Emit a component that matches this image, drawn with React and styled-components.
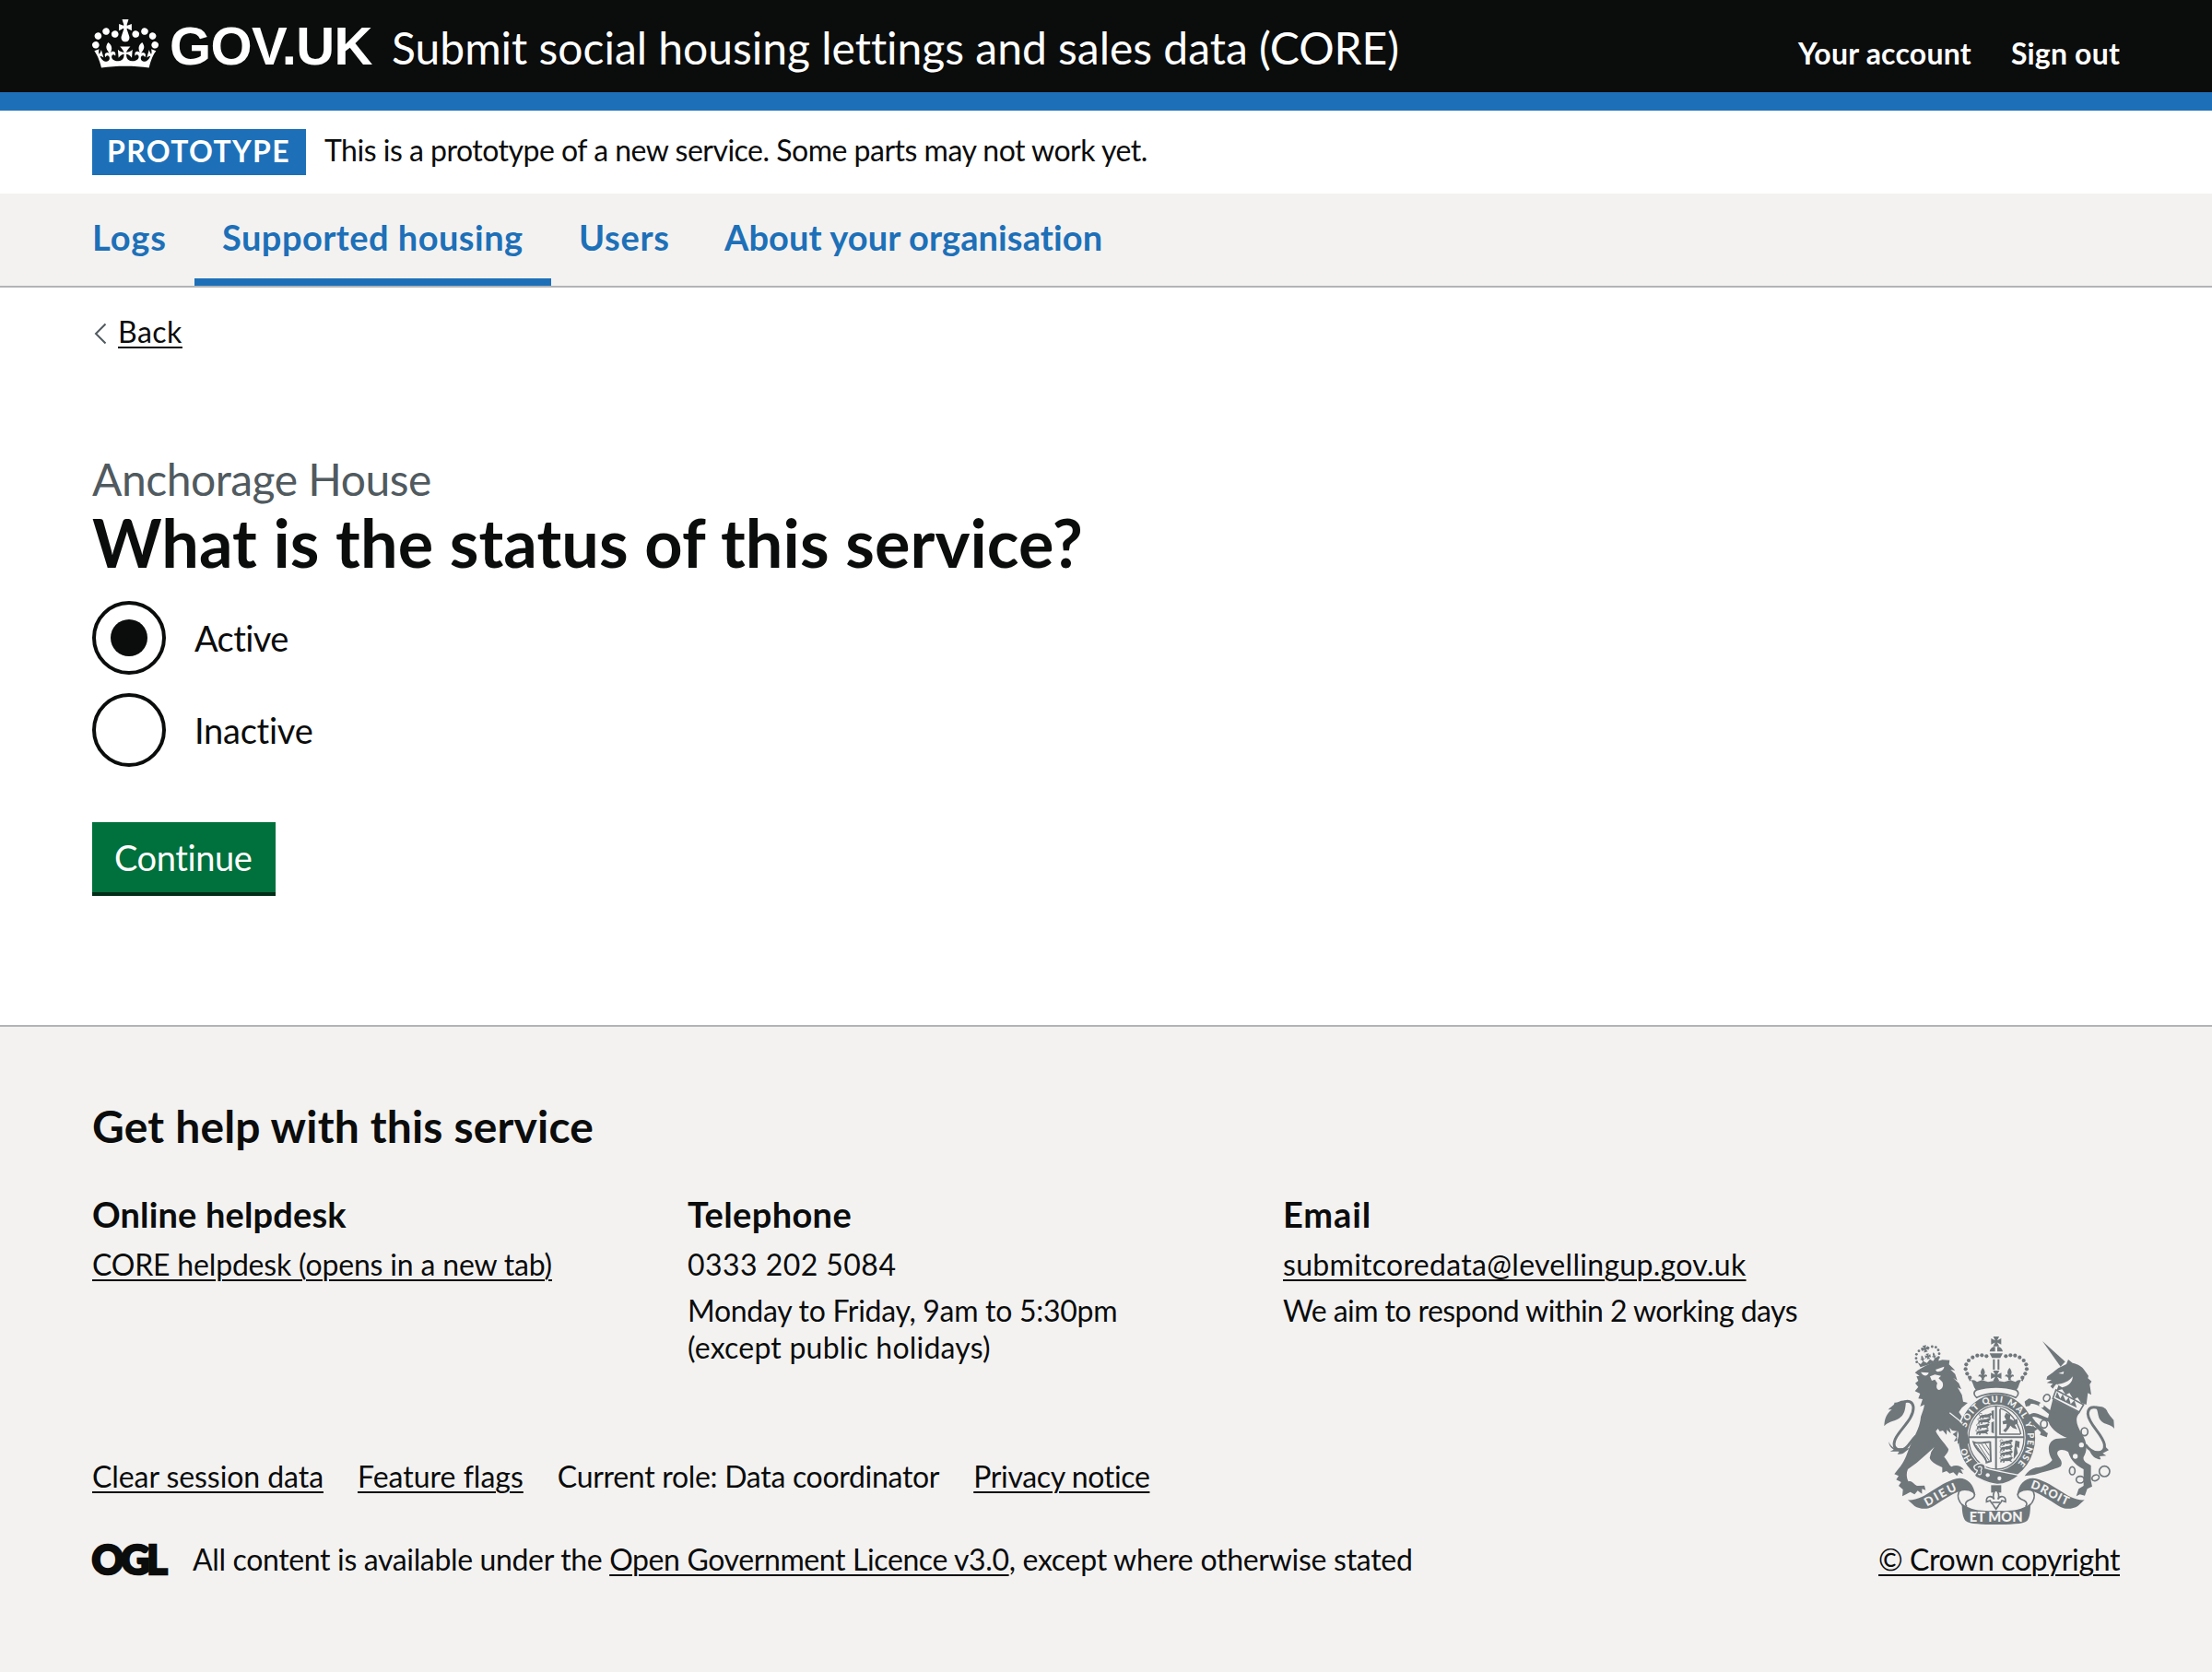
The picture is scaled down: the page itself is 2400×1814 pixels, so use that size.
import React from "react";
import styled, { createGlobalStyle } from "styled-components";

const ink = "#0b0c0c";
const blue = "#1d70b8";
const grey = "#f3f2f1";
const rule = "#b1b4b6";
const crestGrey = "#6f777b";

const GlobalStyle = createGlobalStyle`
  * { box-sizing: border-box; }
  body {
    margin: 0;
    background: #fff;
    color: ${ink};
    font-family: Lato, "Liberation Sans", sans-serif;
    font-variant-ligatures: none;
    -webkit-font-smoothing: antialiased;
  }
`;

const Page = styled.div`
  width: 2400px;
  min-height: 1814px;
  display: flex;
  flex-direction: column;
`;

/* ---------- header ---------- */
const Header = styled.header`
  height: 120px;
  padding: 0 100px;
  display: flex;
  align-items: flex-start;
  background: ${ink};
  color: #fff;
  border-bottom: 20px solid ${blue};
`;
const CrownLogo = styled.svg`
  width: 72px;
  height: 53px;
  margin-top: 21px;
  fill: #fff;
`;
const Wordmark = styled.span`
  width: 222px;
  margin: 20px 0 0 12px;
  font: 700 58px/60px "Liberation Sans", sans-serif;
  letter-spacing: -0.6px;
  white-space: nowrap;
`;
const ServiceName = styled.span`
  margin: 22px 0 0 19px;
  font-size: 48px;
  line-height: 60px;
  letter-spacing: -0.02px;
`;
const AccountNav = styled.nav`
  margin: 38px 0 0 auto;
  display: flex;
  gap: 43px;
  font-size: 32px;
  line-height: 40px;
  font-weight: 700;
`;
const AccountLink = styled.a`
  letter-spacing: ${(p) => p.$track || 0}px;
`;

/* ---------- phase banner ---------- */
const PhaseBanner = styled.div`
  height: 90px;
  padding: 20px 100px;
  display: flex;
  align-items: flex-start;
`;
const PhaseTag = styled.strong`
  width: 232px;
  height: 50px;
  padding-left: 16px;
  background: ${blue};
  color: #fff;
  font-size: 32px;
  line-height: 48px;
  letter-spacing: 1.35px;
`;
const PhaseText = styled.span`
  margin-left: 20px;
  font-size: 32px;
  line-height: 46px;
  letter-spacing: -0.5px;
`;

/* ---------- primary navigation ---------- */
const PrimaryNav = styled.nav`
  height: 102px;
  padding-left: 70px;
  display: flex;
  background: ${grey};
  border-bottom: 2px solid ${rule};
`;
const NavItem = styled.a`
  width: ${(p) => p.$width}px;
  padding: 0 30px;
  color: ${blue};
  font-size: 38px;
  line-height: 95px;
  font-weight: 700;
  letter-spacing: ${(p) => p.$track}px;
  white-space: nowrap;
  box-shadow: ${(p) => (p.$current ? `inset 0 -8px ${blue}` : "none")};
`;

/* ---------- main ---------- */
const Main = styled.main`
  height: 800px;
  padding: 28px 100px 0;
`;
const Text = styled.span`
  font-size: 32px;
  line-height: 40px;
  letter-spacing: ${(p) => p.$track || 0}px;
  white-space: nowrap;
`;
const Link = styled(Text).attrs({ as: "a" })`
  text-decoration: underline;
  text-decoration-thickness: 2px;
  text-underline-offset: 4px;
`;
const BackRow = styled.div`
  height: 40px;
  display: flex;
  align-items: flex-start;
`;
const Chevron = styled.svg`
  width: 28px;
  height: 40px;
  fill: none;
  stroke: #505a5f;
  stroke-width: 2;
`;
const Caption = styled.div`
  margin-top: 110px;
  color: #505a5f;
  font-size: 48px;
  line-height: 60px;
  letter-spacing: -0.49px;
`;
const Title = styled.h1`
  margin: 0 0 26px;
  font-size: 72px;
  line-height: 76px;
  letter-spacing: 0.08px;
`;
const RadioGroup = styled.div`
  display: flex;
  flex-direction: column;
  gap: 20px;
`;
const RadioRow = styled.label`
  height: 80px;
  display: flex;
  font-size: 38px;
  line-height: 80px;
  letter-spacing: ${(p) => p.$track}px;
`;
const RadioMark = styled.span`
  width: 80px;
  height: 80px;
  margin-right: 31px;
  border: 4px solid ${ink};
  border-radius: 50%;
  display: grid;
  place-items: center;
  &::after {
    content: "";
    width: 40px;
    height: 40px;
    border-radius: 50%;
    background: ${(p) => (p.$checked ? ink : "transparent")};
  }
`;
const Button = styled.button`
  display: block;
  width: 199px;
  height: 76px;
  margin-top: 60px;
  padding: 0 0 0 24px;
  border: 0;
  background: #00703c;
  box-shadow: 0 4px 0 #002d18;
  color: #fff;
  text-align: left;
  font-family: inherit;
  font-size: 38px;
  line-height: 75px;
  letter-spacing: -0.4px;
`;

/* ---------- footer ---------- */
const Footer = styled.footer`
  flex: 1;
  padding: 78px 100px 0;
  background: ${grey};
  border-top: 2px solid ${rule};
`;
const HelpTitle = styled.h2`
  margin: 0 0 40px;
  font-size: 48px;
  line-height: 60px;
  letter-spacing: 0.17px;
`;
const HelpGrid = styled.div`
  display: grid;
  grid-template-columns: 646px 646px 1fr;
  height: 189px;
`;
const HelpColumn = styled.div`
  display: flex;
  flex-direction: column;
  align-items: flex-start;
  gap: 10px;
`;
const HelpHeading = styled.h3`
  margin: 0;
  font-size: 38px;
  line-height: 50px;
  letter-spacing: ${(p) => p.$track}px;
`;
const Lines = styled.div`
  display: flex;
  flex-direction: column;
`;
const FooterMeta = styled.div`
  display: flex;
  justify-content: space-between;
  align-items: flex-end;
  margin-top: -31px;
`;
const MetaLinks = styled.div`
  display: flex;
  gap: 37px;
  margin-bottom: 50px;
`;
const Licence = styled.div`
  display: flex;
  align-items: flex-start;
  height: 40px;
`;
const LicenceText = styled.div`
  margin-left: 26px;
  font-size: 32px;
  line-height: 40px;
  white-space: pre;
`;
const OglLogo = styled.svg`
  width: 83px;
  height: 40px;
  overflow: visible;
`;
const CopyrightBlock = styled.div`
  display: flex;
  flex-direction: column;
  align-items: flex-end;
`;
const CrestSvg = styled.svg`
  width: 250px;
  height: 204px;
  margin: 0 6px 18px 0;
`;

function Crown() {
  return (
    <CrownLogo viewBox="0 0 132 97" aria-hidden="true">
      <path d="M25 30.2c3.5 1.5 7.7-.2 9.1-3.7 1.5-3.6-.2-7.8-3.9-9.2-3.6-1.4-7.6.3-9.1 3.9-1.4 3.5.3 7.5 3.9 9zM9 39.5c3.6 1.5 7.8-.2 9.2-3.7 1.5-3.6-.2-7.8-3.9-9.1-3.6-1.5-7.6.2-9.1 3.8-1.4 3.5.3 7.5 3.8 9zM4.4 57.2c3.5 1.5 7.7-.2 9.1-3.8 1.5-3.6-.2-7.7-3.9-9.1-3.5-1.5-7.6.3-9.1 3.8-1.4 3.5.3 7.6 3.9 9.1zm38.3-21.4c3.5 1.5 7.7-.2 9.1-3.8 1.5-3.6-.2-7.7-3.9-9.1-3.6-1.5-7.6.3-9.1 3.8-1.3 3.6.4 7.7 3.9 9.1zm64.4-5.6c-3.6 1.5-7.8-.2-9.1-3.7-1.5-3.6.2-7.8 3.8-9.2 3.6-1.4 7.7.3 9.2 3.9 1.3 3.5-.4 7.5-3.9 9zm15.9 9.3c-3.6 1.5-7.7-.2-9.1-3.7-1.5-3.6.2-7.8 3.7-9.1 3.6-1.5 7.7.2 9.2 3.8 1.5 3.5-.3 7.5-3.8 9zm4.7 17.7c-3.6 1.5-7.8-.2-9.2-3.8-1.5-3.6.2-7.7 3.9-9.1 3.6-1.5 7.7.3 9.2 3.8 1.3 3.5-.4 7.6-3.9 9.1zM89.3 35.8c-3.6 1.5-7.8-.2-9.2-3.8-1.4-3.6.2-7.7 3.9-9.1 3.6-1.5 7.7.3 9.2 3.8 1.4 3.6-.3 7.7-3.9 9.1zM69.7 17.7l8.9 4.7V9.3l-8.9 2.8c-.2-.3-.5-.6-.9-.9L72.4 0H59.6l3.5 11.2c-.3.3-.6.5-.9.9l-8.8-2.8v13.1l8.8-4.7c.3.3.6.7.9.9l-5 15.4v.1c-.2.8-.4 1.6-.4 2.4 0 4.1 3.1 7.5 7 8.1h.2c.3 0 .7.1 1 .1.4 0 .7 0 1-.1h.2c4-.6 7.1-4.1 7.1-8.1 0-.8-.1-1.7-.4-2.4V34l-5.1-15.4c.4-.2.7-.6 1-.9zM66 92.8c16.9 0 32.8 1.1 47.1 3.2 4-16.9 8.9-26.7 14-33.5l-9.6-3.4c1 4.9 1.1 7.2 0 10.2-1.5-1.4-3-4.3-4.2-8.7L108.6 76c2.8-2 5-3.2 7.5-3.3-4.4 9.4-10 11.9-13.6 11.2-4.3-.8-6.3-4.6-5.6-7.9 1-4.7 5.7-5.9 8-.5 4.3-8.7-3-11.4-7.6-8.8 7.1-7.2 7.9-13.5 2.1-21.1-8 6.1-8.1 12.3-4.5 20.8-4.7-5.4-12.1-2.5-9.5 6.2 3.4-5.2 7.9-2 7.2 3.1-.6 4.3-6.4 7.8-13.5 7.2-10.3-.9-10.9-8-11.2-13.8 2.5-.5 7.1 1.8 11 7.3L80.2 60c-4.1 4.4-8 5.3-12.3 5.4 1.4-4.4 8-11.6 8-11.6H55.5s6.4 7.2 7.9 11.6c-4.2-.1-8-1-12.3-5.4l1.4 16.4c3.9-5.5 8.5-7.7 10.9-7.3-.3 5.8-.9 12.8-11.1 13.8-7.2.6-12.9-2.9-13.5-7.2-.7-5 3.8-8.3 7.1-3.1 2.7-8.7-4.6-11.6-9.4-6.2 3.7-8.5 3.6-14.7-4.6-20.8-5.8 7.6-5 13.9 2.2 21.1-4.7-2.6-11.9.1-7.7 8.8 2.3-5.5 7.1-4.2 8.1.5.7 3.3-1.3 7.1-5.7 7.9-3.5.7-9-1.8-13.5-11.2 2.5.1 4.7 1.3 7.5 3.3l-4.7-15.4c-1.2 4.4-2.7 7.2-4.3 8.7-1.1-3-.9-5.3 0-10.2l-9.5 3.4c5 6.9 9.9 16.7 14 33.5 14.8-2.1 30.8-3.2 47.7-3.2z" />
    </CrownLogo>
  );
}

/* ---------- royal arms ---------- */
const archPearls = [[352, 194], [343, 181], [338, 166], [340, 151], [348, 138], [361, 128], [376, 122], [391, 121], [406, 124]];
const lionCrownPearls = [[179, 143], [177, 131], [178, 118], [186, 107], [197, 101], [216, 97], [229, 93], [241, 95], [249, 104], [252, 116], [250, 128]];

const Cross = ({ x, y, s }) => (
  <path
    transform={`translate(${x} ${y}) scale(${s})`}
    d="M-6-10H6L2-2 10-6V6L2 2 6 10H-6L-2 2-10 6V-6L-2-2z"
  />
);
const Fleur = ({ x, y, s = 1 }) => (
  <path
    transform={`translate(${x} ${y}) scale(${s})`}
    d="M0-20C9-9 8-2 3 5 8 0 15 1 14 9 9 5 7 10 4 13V20H-4V13C-7 10-9 5-14 9-15 1-8 0-3 5-8-2-9-9 0-20z"
  />
);
const PassantLion = ({ x, y }) => (
  <g transform={`translate(${x} ${y})`}>
    <path d="M0 4C4-2 10 0 14-1 20-4 26-2 30-5L36-7 40-3 36 2 33 5 37 8 35 11 28 7 20 8 14 7 12 12H6L9 8 4 8 2 12-2 11z" />
    <path d="M2 3C-4 1-3-6 3-6L8-4" fill="none" stroke={crestGrey} strokeWidth="2.5" />
  </g>
);
const RibbonHalf = () => (
  <>
    <path d="M150 592C178 594 205 578 232 560 262 541 290 524 318 521 345 521 364 540 370 577 356 558 340 556 322 562 290 573 250 603 228 615 208 625 186 620 172 612z" />
    <path
      d="M316 566C322 556 346 556 362 566 376 580 358 590 346 594 336 600 336 608 342 614M316 566C308 585 318 600 330 612"
      fill="none"
      stroke={crestGrey}
      strokeWidth="5"
    />
  </>
);

function Crest() {
  const light = grey;
  return (
    <CrestSvg viewBox="72 60 750 612" fill={crestGrey} aria-hidden="true">
      {/* lion */}
      <g>
        {lionCrownPearls.map(([x, y]) => (
          <circle key={x + "-" + y} cx={x} cy={y} r="4.3" />
        ))}
        <g transform="rotate(-14 206 100)">
          <Cross x={206} y={100} s={1.1} />
          <Cross x={209} y={126} s={0.9} />
          <Fleur x={190} y={128} s={0.5} />
          <Fleur x={229} y={128} s={0.5} />
        </g>
        <path d="M182 144 192 150 200 140 212 146 222 134 232 140 240 128 252 126 250 141 191 160z" />
        <path d="M192 164C212 151 236 144 262 136L286 137 284 151 304 170 289 168 304 182 311 203 297 194 316 212 324 232 312 226 326 250 330 272 345 276 326 292 316 306 332 330 347 368 349 402 342 416 336 402 330 416 322 402 313 410 313 398 300 402 308 388 296 378 310 368 294 366 286 357 290 376 277 364 276 380 264 366 254 369 248 360 241 368C250 388 265 400 282 426 284 434 274 444 268 452 278 462 284 478 292 484 306 476 326 482 333 494L322 492 330 508 316 502 310 514 298 502 286 506 276 498 262 503 262 486C246 478 226 470 221 455L226 436 236 420 214 440 178 472 150 492C144 506 146 522 152 532 164 526 170 544 182 546L204 545 208 560 196 556 196 572 182 562 172 574 158 566 144 574 132 580 134 558 120 546 128 534 112 526 120 514 106 508 120 490C138 470 146 446 154 424L166 396C178 374 190 350 192 322 197 306 202 296 204 282L190 288 198 264 184 262 190 246 173 238 184 224 174 212 184 204 178 190 188 188 173 178 182 170z" />
        <path
          d="M176 384C156 404 146 432 122 429 98 424 102 400 120 376 142 346 168 322 168 292 167 270 148 266 134 276"
          fill="none"
          stroke={crestGrey}
          strokeWidth="9"
        />
        <path d="M144 270C128 264 116 278 106 275 108 284 96 286 86 298L98 298C82 310 74 326 73 352 84 336 104 338 122 326 140 314 142 296 144 270zM88 402C92 414 100 420 108 424L156 424C142 434 136 446 116 443L122 434 92 434 104 428C94 422 88 414 88 402z" />
        <path fill={light} d="M192 176 218 178C216 188 204 190 198 184zM240 168 268 158C268 170 254 176 244 174zM222 190 238 184 258 188 250 196 262 208C268 220 262 232 252 234 242 232 242 220 246 212L238 200 228 204z" />
        <path d="M286 308 346 356" stroke={light} strokeWidth="4" />
      </g>

      {/* garter and shield */}
      <g>
        <path
          d="M440 246A127 144 0 0 1 510 510L440 540 372 512A127 144 0 0 1 440 246z"
          stroke={light}
          strokeWidth="5"
        />
        <ellipse cx="438" cy="389" rx="95" ry="108" fill={light} />
        <ellipse cx="438" cy="389" rx="90" ry="103" fill={light} stroke={crestGrey} strokeWidth="4" />
        <path d="M437 286V492M348 388H528" stroke={crestGrey} strokeWidth="6" />
        <PassantLion x={384} y={316} />
        <PassantLion x={380} y={332} />
        <PassantLion x={376} y={350} />
        <PassantLion x={374} y={368} />
        <PassantLion x={452} y={402} />
        <PassantLion x={452} y={420} />
        <PassantLion x={452} y={438} />
        <PassantLion x={452} y={458} />
        <path d="M500 398 514 402 512 424 504 418 508 440 494 460 496 430zM422 302 430 300V330L424 326zM422 340 430 336V376L422 372z" />
        <path d="M450 296V378H516" fill="none" stroke={crestGrey} strokeWidth="5" />
        <path d="M470 308 484 316 482 328 494 334 506 328 508 342 498 348 506 362 492 358 484 350 478 360 468 372 460 366 470 356 472 344 460 346 458 336 470 332 464 320z" />
        <path d="M450 294C480 300 508 336 518 378" fill="none" stroke={crestGrey} strokeWidth="4" />
        <path d="M364 404C384 412 404 402 418 404L420 466 406 470C404 446 372 434 364 404z" fill="none" stroke={crestGrey} strokeWidth="6" />
        <path d="M380 412 414 464M390 410 416 448M402 408 416 430M372 414 404 458" stroke={crestGrey} strokeWidth="3" />
        <path id="garter" d="M438 504A102 115 0 0 1 438 274A102 115 0 0 1 438 504" fill="none" />
        <g fill={light} fontFamily="Lato" fontWeight="900" fontSize="29">
          <text>
            <textPath href="#garter" startOffset="92">HO</textPath>
          </text>
          <text>
            <textPath href="#garter" startOffset="203" textLength="400">SOIT QUI MAL Y PENSE</textPath>
          </text>
        </g>
        <path d="M371 478C386 466 404 476 402 488 440 500 472 502 512 512 490 530 466 542 440 541 414 540 392 528 372 518 360 508 376 506 376 496 364 492 362 482 371 478z" stroke={light} strokeWidth="4" />
        <circle cx="410" cy="511" r="6.5" fill={light} />
        <circle cx="448" cy="522" r="6.5" fill={light} />
        <path d="M378 486C388 480 394 486 388 496 393 506 386 512 379 508" fill="none" stroke={light} strokeWidth="3.5" />
        <path d="M421 544H454V568H421z" />
        <path
          d="M437 558C448 570 448 580 443 590 450 576 470 578 468 598L456 594C452 604 446 606 444 612L437 622 430 612C428 606 422 604 418 594L406 598C404 578 424 576 431 590 426 580 426 570 437 558z"
          fill={light}
          stroke={crestGrey}
          strokeWidth="5"
        />
        <path d="M424 600H450" stroke={crestGrey} strokeWidth="5" />
      </g>

      {/* crown */}
      <g>
        {archPearls.map(([x, y]) => (
          <React.Fragment key={x}>
            <circle cx={x} cy={y} r="6.3" />
            <circle cx={875 - x} cy={y} r="6.3" />
          </React.Fragment>
        ))}
        <Cross x={437.5} y={76} s={1.65} />
        <path d="M428 94H434V109H416C418 100 422 96 428 94zM447 94H441V109H459C457 100 453 96 447 94zM416 115H459L451 130H424zM427 134H433V168H427zM442 134H448V168H442z" />
        <Cross x={437.5} y={188} s={1.7} />
        <Fleur x={394} y={182} />
        <Fleur x={481} y={182} />
        <path d="M344 184C352 196 360 206 366 226L374 238C415 222 460 222 501 238L509 226C515 206 523 196 531 184L524 206C514 200 508 200 500 208L484 202 464 208 437 203 411 208 391 202 375 208C367 200 361 200 351 206z" />
        <path d="M374 234C412 222 463 222 501 234 512 239 512 250 501 259 463 240 412 240 374 259 363 250 363 239 374 234z" fill={light} stroke={crestGrey} strokeWidth="5" />
      </g>

      {/* lion's paw over the garter */}
      <path d="M300 326C326 338 344 362 350 402L343 416 336 402 330 417 322 402 312 410 312 396 316 380z" />

      {/* unicorn */}
      <g>
        <path d="M588 75 662 142 647 158z" />
        <path d="M640 163 666 150 672 135 686 146C704 150 718 158 724 169L738 188 736 196 748 206 742 216 747 250 736 244 731 282 714 276 702 258 690 266 676 244 664 250 652 232 634 236 640 220C636 212 632 212 622 230L614 222 622 214 602 211 618 202 601 200 604 190C616 182 626 174 640 163z" />
        <path d="M636 216C656 214 676 206 686 190 688 206 674 222 652 226" fill={light} />
        <path d="M640 180 658 174 656 182z" fill={light} />
        <path d="M632 234 722 282 708 306 622 262z" fill={light} stroke={crestGrey} strokeWidth="5" />
        <path d="M630 258 636 240 646 262 654 248 664 270 674 258 680 280 692 268 700 292z" />
        <path d="M622 264 710 308C690 326 702 352 714 374 734 400 736 430 722 452 718 468 738 474 746 480L746 530 750 548 734 556 726 578 710 574 698 580 706 556 722 546 722 492C704 484 680 466 672 436 652 422 630 430 638 446 644 458 656 466 648 482 626 494 594 498 562 510L530 514C540 500 552 490 566 487 590 486 612 474 620 462 600 430 606 394 640 392L668 390C640 378 606 356 606 326z" />
        <path d="M614 308C594 296 578 270 546 272L534 276M612 332C590 330 562 306 552 318L546 322 560 340 598 378" fill="none" stroke={crestGrey} strokeWidth="12" />
        <path d="M530 272 544 262 560 266 546 286 534 288zM546 312 540 326 556 326zM584 370 606 374 602 388 580 380zM556 352 574 360 562 368z" />
        <path
          d="M728 412C752 446 794 446 790 412 784 378 738 346 736 312 736 290 752 286 772 294"
          fill="none"
          stroke={crestGrey}
          strokeWidth="9"
        />
        <path d="M760 288C782 284 798 294 800 306L808 318 820 332 822 360C812 346 790 348 778 334 766 320 772 304 760 288zM742 432C748 448 760 460 778 460L774 450 796 448 784 440 804 430 792 418 778 438z" />
        <g fill="none" stroke={crestGrey} strokeWidth="5">
          <ellipse cx="602" cy="260" rx="10" ry="12" transform="rotate(30 602 260)" />
          <ellipse cx="593" cy="345" rx="11" ry="13" />
          <ellipse cx="725" cy="370" rx="11" ry="13" fill={light} />
          <ellipse cx="685" cy="497" rx="9" ry="13" />
          <ellipse cx="711" cy="526" rx="13" ry="11" />
          <ellipse cx="761" cy="520" rx="12" ry="9" transform="rotate(-25 761 520)" />
          <circle cx="790" cy="499" r="17" />
        </g>
        <g fill={light}>
          <circle cx="585" cy="284" r="8" />
          <circle cx="715" cy="413" r="8" />
          <circle cx="695" cy="450" r="8" />
        </g>
      </g>

      {/* motto ribbon */}
      <RibbonHalf />
      <g transform="translate(875 0) scale(-1 1)">
        <RibbonHalf />
      </g>
      <path d="M326 604C360 630 400 628 437 627 475 628 515 630 549 604 549 625 548 650 538 660 526 671 480 672 437 672 395 672 350 671 338 660 328 650 326 625 326 604z" />
      <g fill={light} fontFamily="Lato" fontWeight="900">
        <path id="ribbonLeft" d="M212 613C246 596 276 574 318 558" fill="none" />
        <path id="ribbonRight" d="M548 553C590 564 630 596 676 612" fill="none" />
        <text fontSize="38">
          <textPath href="#ribbonLeft" textLength="112">DIEU</textPath>
        </text>
        <text fontSize="38">
          <textPath href="#ribbonRight" textLength="132">DROIT</textPath>
        </text>
        <text x="350" y="664" fontSize="44" textLength="174">
          ET MON
        </text>
      </g>
    </CrestSvg>
  );
}

export default function App() {
  return (
    <Page>
      <GlobalStyle />
      <Header>
        <Crown />
        <Wordmark>GOV.UK</Wordmark>
        <ServiceName>Submit social housing lettings and sales data (CORE)</ServiceName>
        <AccountNav>
          <AccountLink $track={0.22}>Your account</AccountLink>
          <AccountLink $track={0.18}>Sign out</AccountLink>
        </AccountNav>
      </Header>
      <PhaseBanner>
        <PhaseTag>PROTOTYPE</PhaseTag>
        <PhaseText>This is a prototype of a new service. Some parts may not work yet.</PhaseText>
      </PhaseBanner>
      <PrimaryNav>
        <NavItem $width={141} $track={0.9}>Logs</NavItem>
        <NavItem $width={387} $track={0.46} $current>Supported housing</NavItem>
        <NavItem $width={158} $track={0.7}>Users</NavItem>
        <NavItem $width={470} $track={0.1}>About your organisation</NavItem>
      </PrimaryNav>
      <Main>
        <BackRow>
          <Chevron viewBox="0 0 28 40">
            <path d="M14.5 11.5 4 22 14.5 32.5" />
          </Chevron>
          <Link $track={0.5}>Back</Link>
        </BackRow>
        <Caption>Anchorage House</Caption>
        <Title>What is the status of this service?</Title>
        <RadioGroup>
          <RadioRow $track={-0.6}>
            <RadioMark $checked />
            Active
          </RadioRow>
          <RadioRow $track={-0.25}>
            <RadioMark />
            Inactive
          </RadioRow>
        </RadioGroup>
        <Button>Continue</Button>
      </Main>
      <Footer>
        <HelpTitle>Get help with this service</HelpTitle>
        <HelpGrid>
          <HelpColumn>
            <HelpHeading $track={0.15}>Online helpdesk</HelpHeading>
            <Link $track={-0.18}>CORE helpdesk (opens in a new tab)</Link>
          </HelpColumn>
          <HelpColumn>
            <HelpHeading $track={0.36}>Telephone</HelpHeading>
            <Text $track={0.45}>0333 202 5084</Text>
            <Lines>
              <Text $track={-0.29}>Monday to Friday, 9am to 5:30pm</Text>
              <Text $track={0.21}>(except public holidays)</Text>
            </Lines>
          </HelpColumn>
          <HelpColumn>
            <HelpHeading $track={0.9}>Email</HelpHeading>
            <Link $track={0.3}>submitcoredata@levellingup.gov.uk</Link>
            <Text $track={-0.57}>We aim to respond within 2 working days</Text>
          </HelpColumn>
        </HelpGrid>
        <FooterMeta>
          <div>
            <MetaLinks>
              <Link $track={-0.07}>Clear session data</Link>
              <Link>Feature flags</Link>
              <Text $track={-0.3}>Current role: Data coordinator</Text>
              <Link $track={-0.36}>Privacy notice</Link>
            </MetaLinks>
            <Licence>
              <OglLogo viewBox="0 0 83 40" role="img">
                <text x="-0.4" y="35.5" fill={ink} stroke={ink} strokeWidth="2.6" fontFamily="Lato" fontWeight="900" fontSize="43" textLength="82">
                  OGL
                </text>
              </OglLogo>
              <LicenceText>
                <Text $track={-0.35}>{"All content is available under the "}</Text>
                <Link $track={-0.39}>Open Government Licence v3.0</Link>
                <Text $track={-0.28}>, except where otherwise stated</Text>
              </LicenceText>
            </Licence>
          </div>
          <CopyrightBlock>
            <Crest />
            <Link $track={-0.38}>© Crown copyright</Link>
          </CopyrightBlock>
        </FooterMeta>
      </Footer>
    </Page>
  );
}
